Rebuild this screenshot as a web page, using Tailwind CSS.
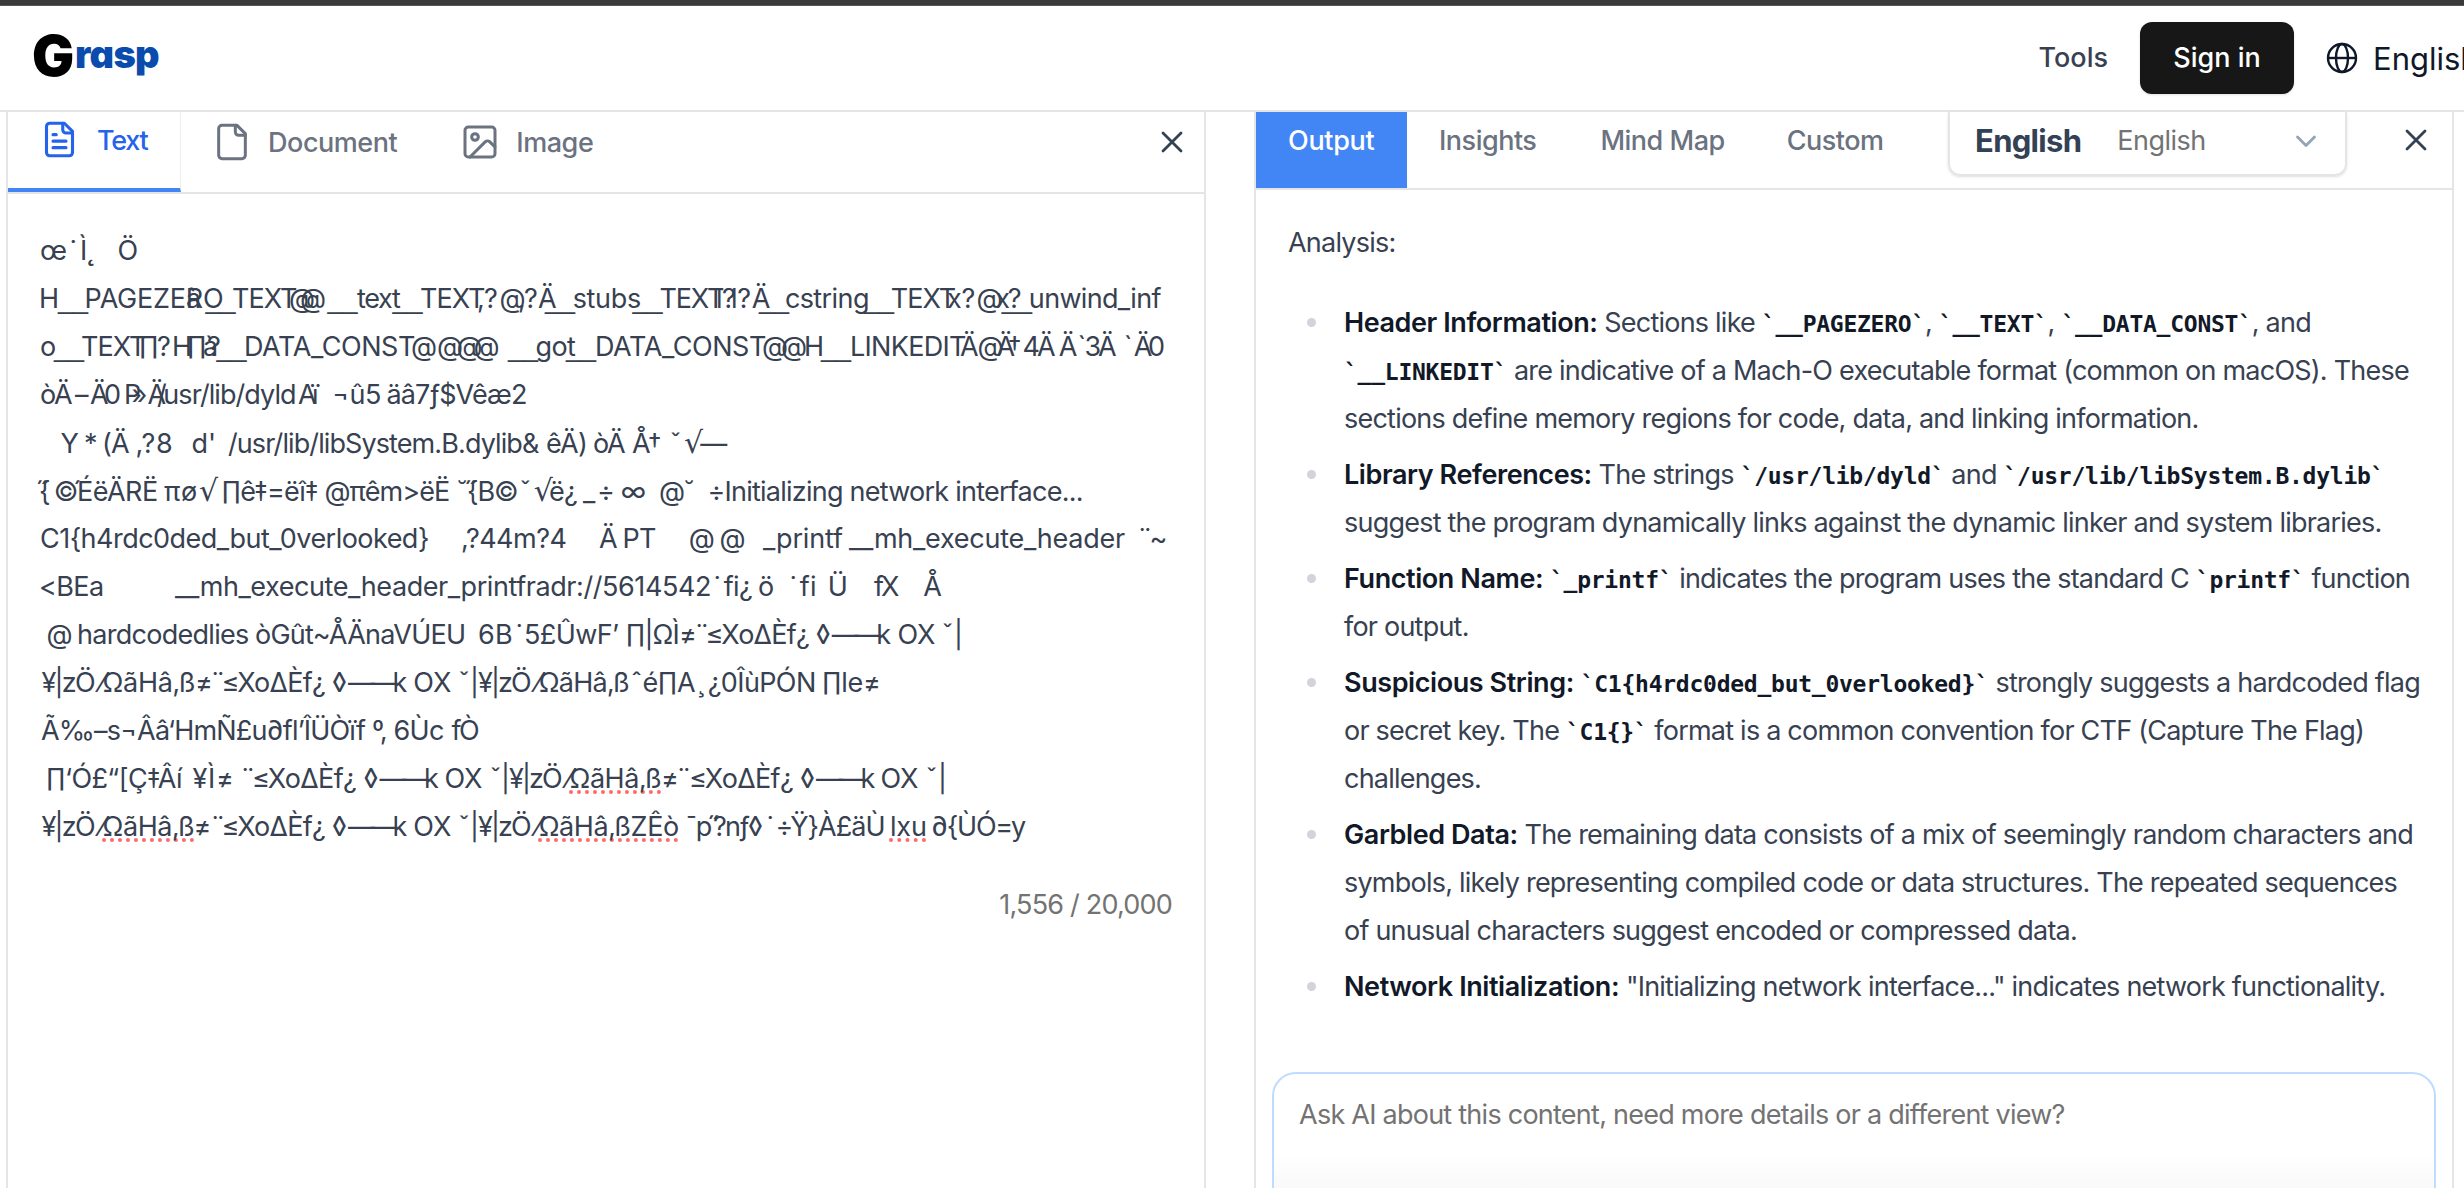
<!DOCTYPE html>
<html lang="en">
<head>
<meta charset="utf-8">
<title>Grasp</title>
<script src="https://cdn.jsdelivr.net/npm/@tailwindcss/browser@4"></script>
</head>
<body class="h-[1188px] w-[2464px] overflow-hidden bg-white font-['Inter',sans-serif] text-[27px] text-[#374151]">
<div class="flex h-full flex-col">
  <div class="h-1.5 shrink-0 border-b border-[#555] bg-[#3a3a3a]"></div>
  <header class="flex h-[106px] shrink-0 items-center border-b-2 border-[#e5e5e5] pl-8">
    <div class="flex items-start self-start font-black leading-none">
      <span class="mt-[22px] w-[43px] text-[56px] text-black">G</span>
      <span class="mt-[29px] text-[38px] tracking-[-0.7px] text-[#0a4cae] [font-feature-settings:'cv11']">rasp</span>
    </div>
    <nav class="ml-auto flex shrink-0 items-center font-medium">
      <a class="mr-8 mt-px">Tools</a>
      <button class="mr-[32px] h-[72px] w-[154px] rounded-xl bg-[#171717] pt-px text-white shadow">Sign in</button>
      <svg class="mr-[15px] size-8" viewBox="0 0 32 32" fill="none" stroke="#0f172a" stroke-width="2.4"><circle cx="16" cy="16" r="14"/><ellipse cx="16" cy="16" rx="6" ry="14"/><path d="M2 16h28"/></svg>
      <span class="mt-0.5 w-[91px] overflow-hidden whitespace-nowrap text-[31px] font-normal text-[#0f172a]">English</span>
    </nav>
  </header>
  <main class="flex min-h-0 flex-1 pl-1.5">
    <section class="w-[1200px] border-x-2 border-[#e5e5e5]">
      <div class="flex h-[82px] border-b-2 border-[#e5e5e5] font-medium tracking-[-0.45px] text-[#6b7280]">
        <div class="flex w-[173px] border-b-4 border-r border-[#4285f4] border-r-[#eee] pl-[32px] pt-[8px] tracking-[-1.3px] text-[#2563eb]">
          <svg class="mr-[18px] size-[39px]" viewBox="0 0 24 24" fill="none" stroke="currentColor" stroke-width="1.9" stroke-linecap="round" stroke-linejoin="round"><path d="M15 2H6a2 2 0 0 0-2 2v16a2 2 0 0 0 2 2h12a2 2 0 0 0 2-2V7Z"/><path d="M14 2v4a2 2 0 0 0 2 2h4M10 9H8M16 13H8M16 17H8"/></svg>
          <span class="mt-px">Text</span>
        </div>
        <div class="flex pl-[31px] pt-[10px]">
          <svg class="mr-[16px] size-[40px]" viewBox="0 0 24 24" fill="none" stroke="currentColor" stroke-width="1.8" stroke-linecap="round" stroke-linejoin="round"><path d="M15 2H6a2 2 0 0 0-2 2v16a2 2 0 0 0 2 2h12a2 2 0 0 0 2-2V7Z"/><path d="M14 2v4a2 2 0 0 0 2 2h4"/></svg>
          <span class="mt-px">Document</span>
          <svg class="ml-[63px] mr-[16px] size-[40px]" viewBox="0 0 24 24" fill="none" stroke="currentColor" stroke-width="1.8" stroke-linecap="round" stroke-linejoin="round"><rect x="3" y="3" width="18" height="18" rx="2"/><circle cx="9" cy="9" r="2"/><path d="m21 15-3.1-3.1a2 2 0 0 0-2.8 0L6 21"/></svg>
          <span class="mt-px">Image</span>
        </div>
        <svg class="ml-auto mr-[20px] mt-[18px] size-6" viewBox="0 0 24 24" fill="none" stroke="#334155" stroke-width="2.8" stroke-linecap="round"><path d="M3 3l18 18M21 3L3 21"/></svg>
      </div>
      <div id="source" class="pt-[33px] leading-[48px] text-[#374151]"></div>
      <div class="mt-[30px] pr-[32px] text-right leading-[48px] tracking-[-0.8px] text-[#737373]">1,556 / 20,000</div>
    </section>
    <section class="ml-12 w-[1200px] border-x-2 border-[#e5e5e5]">
      <div class="flex h-[78px] border-b-2 border-[#e5e5e5] font-medium tracking-[-0.5px] text-[#6b7280]">
        <div class="w-[151px] bg-[#4285f4] pl-[32px] pt-[9px] tracking-[-0.3px] text-white">Output</div>
        <div class="pl-[32px] pt-[9px]">Insights</div>
        <div class="pl-[64px] pt-[9px]">Mind Map</div>
        <div class="pl-[62px] pt-[9px]">Custom</div>
        <div class="ml-auto flex h-[64px] w-[399px] rounded-b-xl border-2 border-t-0 border-[#e5e5e5] pl-[25px] pt-[9px] shadow-sm">
          <span class="mt-[-3px] text-[31px] font-bold tracking-[-0.7px] text-[#334155]">English</span>
          <span class="ml-[36px] font-normal text-[#737373]">English</span>
          <svg class="ml-auto mr-[27px] mt-[8px] size-6" viewBox="0 0 24 24" fill="none" stroke="#94a3b8" stroke-width="2.8" stroke-linecap="round" stroke-linejoin="round"><path d="M3.500 8l8.500 8.500L20.500 8"/></svg>
        </div>
        <svg class="ml-[57px] mr-[24px] mt-[16px] size-6" viewBox="0 0 24 24" fill="none" stroke="#334155" stroke-width="2.8" stroke-linecap="round"><path d="M3 3l18 18M21 3L3 21"/></svg>
      </div>
      <div class="h-[882px] pl-[32px] pt-[29px] leading-[48px] tracking-[-0.78px]">
        <p>Analysis:</p>
        <ul class="mt-[32px] flex flex-col gap-2 whitespace-nowrap pl-[56px] [&_b]:font-semibold [&_b]:tracking-[-0.42px] [&_b]:text-[#111827] [&_code]:font-['DejaVu_Sans_Mono',monospace] [&_code]:text-[23px] [&_code]:font-bold [&_code]:leading-none [&_code]:tracking-[-0.25px] [&_code]:text-[#111827] [&>li]:before:float-left [&>li]:before:-ml-[37px] [&>li]:before:mt-[19px] [&>li]:before:size-[9px] [&>li]:before:rounded-full [&>li]:before:bg-[#d1d5db]">
          <li><b>Header Information:</b> Sections like <code>`__PAGEZERO`</code>, <code>`__TEXT`</code>, <code>`__DATA_CONST`</code>, and<br><code>`__LINKEDIT`</code> are indicative of a Mach-O executable format (common on macOS). These<br>sections define memory regions for code, data, and linking information.</li>
          <li><b>Library References:</b> The strings <code>`/usr/lib/dyld`</code> and <code>`/usr/lib/libSystem.B.dylib`</code><br>suggest the program dynamically links against the dynamic linker and system libraries.</li>
          <li><b>Function Name:</b> <code>`_printf`</code> indicates the program uses the standard C <code>`printf`</code> function<br>for output.</li>
          <li><b>Suspicious String:</b> <code>`C1{h4rdc0ded_but_0verlooked}`</code> strongly suggests a hardcoded flag<br>or secret key. The <code>`C1{}`</code> format is a common convention for CTF (Capture The Flag)<br>challenges.</li>
          <li><b>Garbled Data:</b> The remaining data consists of a mix of seemingly random characters and<br>symbols, likely representing compiled code or data structures. The repeated sequences<br>of unusual characters suggest encoded or compressed data.</li>
          <li><b>Network Initialization:</b> "Initializing network interface..." indicates network functionality.</li>
        </ul>
      </div>
      <div class="mx-4 h-40 rounded-t-3xl border-2 border-[#bfdbfe] bg-linear-to-b from-white from-50% to-[#f2f2f2] pl-[25px] pt-[17px] leading-[48px] tracking-[-0.75px] text-[#737373]">Ask AI about this content, need more details or a different view?</div>
    </section>
  </main>
</div>
<script>
// The lozenge, two dashes and "k" that repeat through the dump
const dashes = (x) => [[x,'◊',0],[x+15,'—',0],[x+37.5,'—',0],[x+61.5,'k',0]];
// Raw bytes of the pasted binary: [ink start, text, ink end (0 = natural), misspelled]
const rows = [
  [[41,'œ',0],[71,'˙',0],[80,'Ì',0],[88,'˛',0],[118.6,'Ö',0]],
  [[41,'H',0],[57,'__',87],[86.6,'PAGEZERO',223],[187,'à',0],[204.5,'__',234],[233,'TEXT',297],[290,'@',0],[301,'@',0],[326.6,'__',356],[357,'text',401],[391.5,'__',421],[421,'TEXT',485],[478,',',0],[485,'?',0],[500.6,'@',0],[519,',',0],[525,'?',0],[538,'Ä',0],[544,'__',574],[573.7,'stubs',640],[631.6,'__',661],[660.5,'TEXT',724],[718,'l',0],[723,'?',0],[733,'l',0],[738.4,'?',0],[751.8,'Ä',0],[758,'__',787],[786,'cstring',868],[863,'__',892],[891.8,'TEXT',956],[947,'x',0],[962.6,'?',0],[977.6,'@',0],[995.4,'x',0],[1009,'?',0],[1001,'__',1031],[1031,'unwind_inf',1161.5]],
  [[41,'o',0],[53,'__',83],[82,'TEXT',146],[141,'∏',0],[158,'?',0],[174,'H',0],[189,'∏',0],[204,'à',0],[208,'?',0],[215.5,'__',245],[246,'DATA_CONST',415],[412,'@',0],[438,'@',0],[457.5,'@',0],[474.5,'@',0],[507,'__',537],[536.6,'got',576],[565,'__',595],[597,'DATA_CONST',766],[763,'@',0],[782,'@',0],[806,'H',0],[820,'__',850],[852,'LINKEDIT',966],[960,'Ä',0],[978.4,'@',0],[996.6,'Ä',0],[1009,'†',0],[1023.5,'4Ä',1055],[1058.7,'Ä',0],[1078.5,'`',0],[1085.6,'3Ä',1116],[1124.7,'`',0],[1133.8,'Ä0',1164]],
  [[41,'òÄ',72],[75,'–',0],[90,'Ä0',120],[126,'P',0],[132.500,'»',0],[147.500,'Ä',0],[157,'/',0],[165.3,'usr/lib/dyld',295],[298,'Aï',320],[334,'¬û5',380],[387.500,'äâ7ƒ$Vêæ2',526]],
  [[60.5,'Y',0],[85,'*',0],[104,'(Ä',129],[136.4,',?8',172],[192.6,"d'",214],[228,'/usr/lib/libSystem.B.dylib&',539],[547,'êÄ)',585],[594,'òÄ',625],[632,'Å',0],[649,'†',0],[671,'ˇ',0],[684,'√',0],[700.4,'—',0]],
  [[37.5,'˝',0],[40,'{',0],[55.8,'©',0],[75,'´',0],[79,'ÉëÄRË',157],[164,'πø',197],[199,'√',0],[223.4,'∏ê‡=ëî‡',318],[325.4,'@πêm>ëË',449],[458,'˘',0],[466,'˝',0],[468,'{B©',517],[520.8,'ˇ',0],[533.8,'√',0],[550,'ë¿',577],[583,'_',0],[599,'÷',0],[621.7,'∞',0],[660,'@',0],[685,'˘',0],[709.5,'÷Initializing network interface...',1081.6]],
  [[41,'C1{h4rdc0ded_but_0verlooked}',428],[462,',?44m?4',565.5],[599,'Ä',0],[624.5,'PT',656],[689.8,'@',0],[720.6,'@',0],[763,'_printf',843],[849,'__mh_execute_header',1125],[1140,'¨',0],[1151.6,'~',0]],
  [[41,'<BEa',103],[175,'__mh_execute_header_printfradr://5614542',710],[715,'˙',0],[723.8,'fi¿',752],[759,'ö',0],[791,'˙',0],[799.7,'fi',815],[829.7,'Ü',0],[874,'fX',899],[923.4,'Å',0]],
  [[47.5,'@',0],[79,'hardcodedlies',248],[256,'òGût~ÅÄnaVÚEU',464],[479,'6B',512],[517,'˙',0],[526,'5£ÛwF’',618],[627.7,'∏|ΩÌ≠',694],[697,'¨',0],[707.5,'≤XoΔÈf¿',809],...dashes(816.7),[898.5,'OX',935],[943,'ˇ',0],[957,'|',0]],
  [[41.5,'¥|zÖ',95],[95,'⁄',0],[103.6,'ΩãHâ‚ß≠',210],[213,'¨',0],[223.4,'≤XoΔÈf¿',325],...dashes(333),[414.4,'OX',451],[459.5,'ˇ',0],[473,'|',0],[478,'¥|zÖ',531],[531,'⁄',0],[539.7,'ΩãHâ‚ß',629],[632,'ˆ',0],[643.5,'é∏A',695],[699,'¸',0],[708.7,'¿0ÎùPÓN',814],[824,'∏le≠',878]],
  [[41,'Ã‰–s¬Ââ‘HmÑ£u∂fl’ÎÜÒïf',366],[373,'º‚',386],[394.6,'6Ùc',444],[451.6,'fÒ',479]],
  [[48,'∏‘Ó£“[Ç‡Âí',185],[192.6,'¥Ì≠',231],[243,'¨',0],[254,'≤XoΔÈf¿',356],...dashes(364.6),[445.6,'OX',482],[491,'ˇ',0],[504,'|',0],[509,'¥|zÖ',562],[562,'⁄',0],[570.6,'ΩãHâ‚ß',661,1],[663,'≠',0],[679,'¨',0],[691,'≤XoΔÈf¿',793],...dashes(801),[881.5,'OX',918],[927,'ˇ',0],[941,'|',0]],
  [[41.5,'¥|zÖ',95],[95,'⁄',0],[103.6,'ΩãHâ‚ß',194,1],[195.5,'≠',0],[213,'¨',0],[223.4,'≤XoΔÈf¿',325],...dashes(333),[414.4,'OX',451],[459.5,'ˇ',0],[473,'|',0],[478,'¥|zÖ',531],[531,'⁄',0],[539.7,'ΩãHâ‚ßZÊò',678,1],[687,'¯',0],[697.7,'p',0],[709,'˝',0],[714,'?nƒ◊',762],[768,'˙',0],[777.5,'÷Ÿ}À£äÙ',883.5],[892,'lxu',925,1],[933,'∂{ÙÓ=y',1026]],
];
// Glyphs that Inter draws too small or with gaps come from another family
const faces = {
  '√': ['30px "DejaVu Sans"', "font-['DejaVu_Sans',sans-serif] text-[30px]"],
  '⁄': ['27px "DejaVu Sans"', "font-['DejaVu_Sans',sans-serif]"],
  '__': ['27px "Liberation Sans"', "font-['Liberation_Sans',sans-serif]"],
};
const ctx = document.createElement('canvas').getContext('2d');
const source = document.getElementById('source');
document.fonts.load('27px Inter').finally(() => {
  for (const row of rows) {
    const line = document.createElement('div');
    line.className = 'flex h-12 items-baseline';
    let cursor = 8;
    for (const [start, text, end, misspelled] of row) {
      const face = faces[text];
      ctx.font = face ? face[0] : '27px Inter, sans-serif';
      const m = ctx.measureText(text);
      const bearing = -m.actualBoundingBoxLeft;
      const ink = m.actualBoundingBoxRight - bearing;
      const n = [...text].length;
      const span = document.createElement('span');
      span.className = 'w-0 whitespace-pre tracking-[-0.75px]';
      if (face) span.className += ' ' + face[1];
      if (misspelled) span.className += ' underline decoration-[#ff6b6b] decoration-dotted decoration-4 underline-offset-2 [text-decoration-skip-ink:none]';
      span.textContent = text;
      span.style.marginLeft = (start - bearing - cursor) + 'px';
      if (end && n > 1) span.style.letterSpacing = (face ? 0 : (end - start - ink) / (n - 1)).toFixed(2) + 'px';
      cursor = start - bearing;
      line.append(span);
    }
    source.append(line);
  }
});
</script>
</body>
</html>
